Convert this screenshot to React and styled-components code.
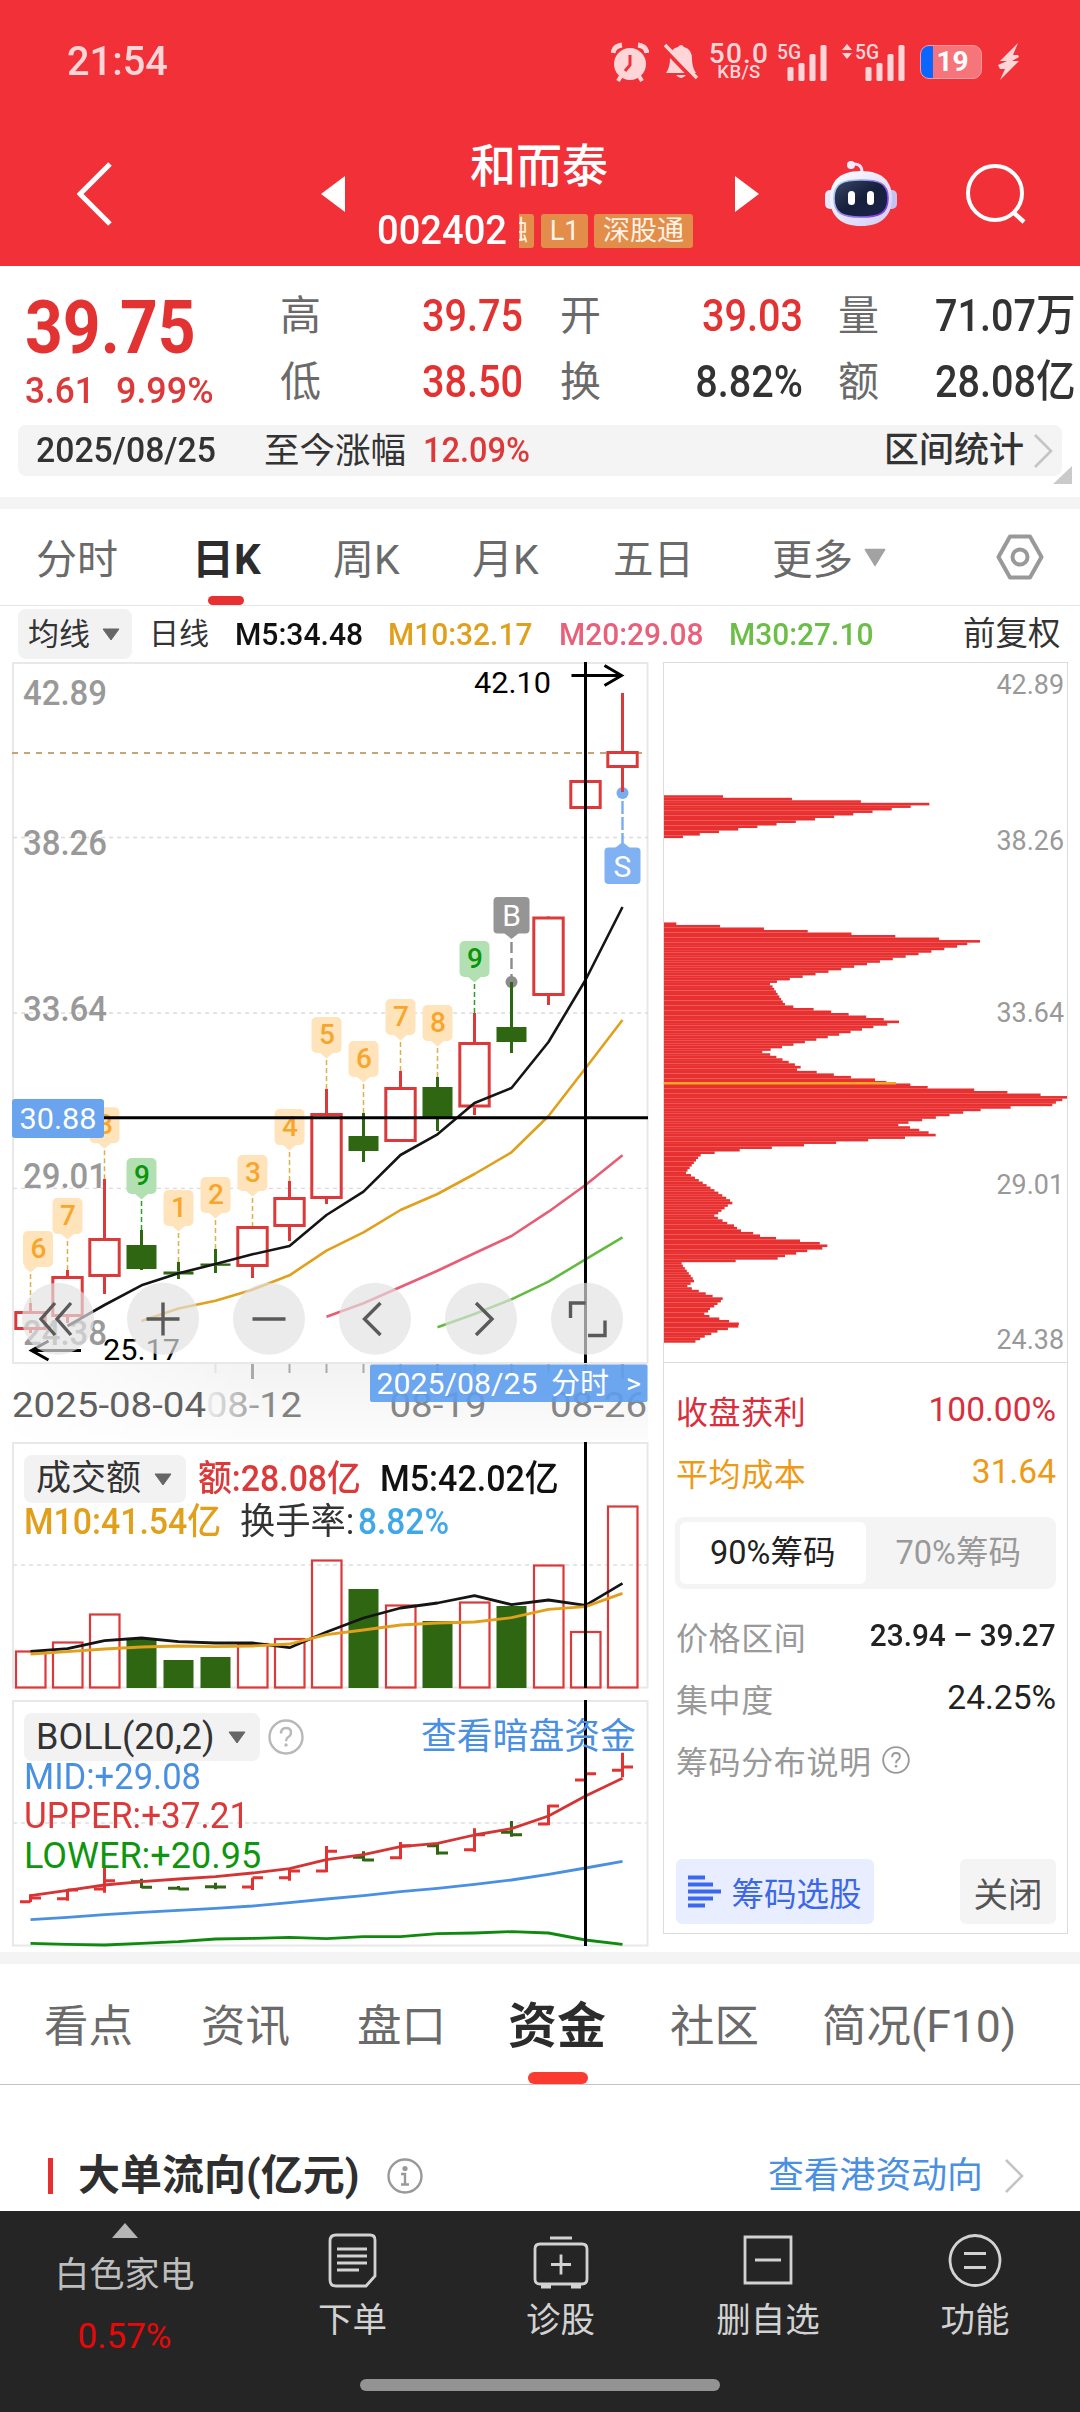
import React from 'react';
import styled, { createGlobalStyle } from 'styled-components';

const Global = createGlobalStyle`
  * { box-sizing: border-box; }
  body { margin: 0; background: #fff; }
  svg { display: block; }
`;

const red = '#e23232';
const up = '#dc3a3a';
const down = '#2f6612';
const orange = '#e0a01c';
const blue = '#4a90e2';

const Page = styled.div`
  width: 1080px;
  height: 2412px;
  overflow: hidden;
  display: flex;
  flex-direction: column;
  background: #fff;
  color: #333;
  font-family: Roboto, 'Noto Sans CJK SC', sans-serif;
  white-space: nowrap;
`;

const T = styled.span`
  display: block;
  font-size: ${(p) => p.$s}px;
  line-height: ${(p) => p.$lh || Math.round(p.$s * 1.2)}px;
  font-weight: ${(p) => p.$w || 400};
  color: ${(p) => p.$c || 'inherit'};
  transform: scaleX(${(p) => p.$x || 1});
  transform-origin: ${(p) => (p.$right ? 'right' : 'left')} center;
`;

/* ---------- header ---------- */
const Header = styled.header`
  height: 266px;
  flex: none;
  background: #f23038;
  color: #fff;
`;
const StatusBar = styled.div`
  height: 123px;
  padding-left: 67px;
  display: grid;
  grid-template-columns: 544px 52px 46px 68px 64px 79px 78px 22px;
  align-items: center;
  color: #ffd6d8;
`;
const Speed = styled.div`
  width: 60px;
  display: flex;
  flex-direction: column;
  align-items: center;
  font-weight: 500;
`;
const SpeedTop = styled.span`
  font-size: 28px;
  line-height: 21px;
  letter-spacing: 1.2px;
`;
const SpeedUnit = styled.span`
  font-size: 18.5px;
  line-height: 16px;
  letter-spacing: 0.4px;
`;
const Battery = styled.div`
  width: 62px;
  height: 34px;
  padding-left: 3px;
  border-radius: 9px;
  border: 1px solid #f99a9e;
  background: linear-gradient(90deg, #0a66ff 12px, #f6757b 12px);
  color: #fff;
  font: 700 28px/32px Roboto, sans-serif;
  text-align: center;
`;
const Nav = styled.div`
  height: 142px;
  padding-left: 77px;
  display: grid;
  grid-template-columns: 244px 56px 358px 90px 141px 60px;
  align-items: center;
`;
const TitleBlock = styled.div`
  padding-top: 9px;
`;
const StockName = styled.div`
  width: 324px;
  height: 64px;
  text-align: center;
  font-size: 46px;
  line-height: 63px;
  font-weight: 500;
`;
const CodeLine = styled.div`
  height: 64px;
  display: grid;
  grid-template-columns: 142px 22px 53px 99px;
  align-items: center;
`;
const Badge = styled.span`
  height: 34px;
  width: ${(p) => p.$width}px;
  overflow: hidden;
  display: flex;
  justify-content: ${(p) => (p.$cut ? 'flex-end' : 'center')};
  padding-right: ${(p) => (p.$cut ? 6 : 0)}px;
  border-radius: ${(p) => (p.$cut ? '0 3px 3px 0' : '3px')};
  background: #e38d4a;
  color: #fff2e6;
  font-size: 27px;
  line-height: 34px;
`;

function Signal({ arrows }) {
  const o = arrows ? 14 : 0;
  return (
    <svg width={50 + o} height="52" viewBox={`0 -6 ${50 + o} 52`}>
      {arrows && <path d="M1 8l5-6 5 6zM1 11l5 6 5-6z" fill="#ffd6d8" />}
      <text x={o} y="17" fontSize="20" fontWeight="500" fill="#ffd6d8" fontFamily="Roboto" textLength="24" lengthAdjust="spacingAndGlyphs">5G</text>
      {[[10, 25], [21, 21], [32, 12], [43, 3]].map(([x, y]) => (
        <rect key={x} x={x + o + 0.5} y={y} width="6" height={39 - y} rx="1.5" fill="#ffd6d8" />
      ))}
    </svg>
  );
}

function AlarmIcon() {
  return (
    <svg width="38" height="40" viewBox="0 0 38 40">
      <circle cx="19" cy="22" r="16" fill="#ffd6d8" />
      <path d="M2 11Q3 4 11 3M36 11Q35 4 27 3" stroke="#ffd6d8" strokeWidth="5" fill="none" />
      <path d="M10 34l-3 5M28 34l3 5" stroke="#ffd6d8" strokeWidth="4" />
      <path d="M19 13v10l-5 6" stroke="#f23038" strokeWidth="3" fill="none" />
    </svg>
  );
}
function BellOffIcon() {
  return (
    <svg width="36" height="38" viewBox="0 0 36 38">
      <path d="M3 30Q7 24 7 16Q7 5 15 4Q18 0 21 4Q29 6 29 16Q29 24 33 30z" fill="#ffd6d8" />
      <path d="M13 32h10q-5 6-10 0z" fill="#ffd6d8" />
      <path d="M0 5L32 38" stroke="#f23038" strokeWidth="4" />
      <path d="M2 2L34 35" stroke="#ffd6d8" strokeWidth="3.5" />
    </svg>
  );
}
function Robot() {
  return (
    <svg width="72" height="68" viewBox="0 0 72 68">
      <defs>
        <linearGradient id="shell" x1="0" y1="0" x2="1" y2="1">
          <stop offset="0" stopColor="#fff" /><stop offset="1" stopColor="#cfccf5" />
        </linearGradient>
        <linearGradient id="visor" x1="0" y1="0" x2="1" y2="1">
          <stop offset="0" stopColor="#3a4766" /><stop offset="0.5" stopColor="#161f3c" /><stop offset="1" stopColor="#1c2548" />
        </linearGradient>
        <linearGradient id="glow" x1="0" y1="0" x2="1" y2="0.6">
          <stop offset="0" stopColor="#a6e4f2" /><stop offset="1" stopColor="#8a3cf0" />
        </linearGradient>
      </defs>
      <path d="M27 4q10-1 10 8" stroke="#e8e4fb" strokeWidth="3" fill="none" />
      <circle cx="26" cy="5" r="4" fill="#f1effd" />
      <rect x="0" y="30" width="12" height="19" rx="5" fill="#e8e6fa" />
      <rect x="60" y="30" width="12" height="19" rx="5" fill="#c6c2ee" />
      <path d="M36 11C58 11 67 22 67 38C67 56 56 66 36 66C16 66 5 56 5 38C5 22 14 11 36 11z" fill="url(#shell)" />
      <path d="M36 20C54 20 63 23 63 38C63 54 54 57 36 57C18 57 9 54 9 38C9 23 18 20 36 20z" fill="url(#visor)" stroke="url(#glow)" strokeWidth="1.6" />
      <rect x="23" y="31" width="7" height="14" rx="3.5" fill="#fff" />
      <rect x="42" y="31" width="7" height="14" rx="3.5" fill="#fff" />
    </svg>
  );
}

/* ---------- quote ---------- */
const Quote = styled.section`
  height: 159px;
  flex: none;
  display: grid;
  grid-template-columns: 255px 60px 220px 60px 218px 97px 145px;
  padding-left: 25px;
`;
const PriceCol = styled.div`
  padding-top: 17px;
`;
const Change = styled.div`
  display: grid;
  grid-template-columns: 91px 1fr;
`;
const Pair = styled.div`
  padding-top: 17px;
  display: flex;
  flex-direction: column;
`;
const QuoteVal = styled.span`
  width: ${(p) => (p.$last ? 145 : 183)}px;
  font-size: 44px;
  line-height: 66px;
  font-weight: 500;
  color: ${(p) => p.$c};
  text-align: ${(p) => (p.$last ? 'left' : 'right')};
  transform: scaleX(0.9);
  transform-origin: ${(p) => (p.$last ? 'left' : 'right')} center;
`;
const Strip = styled.div`
  height: 51px;
  flex: none;
  margin: 0 18px;
  padding: 0 0 3px 18px;
  border-radius: 8px;
  background: #f4f4f4;
  display: grid;
  grid-template-columns: 228px 159px 461px 149px 22px;
  align-items: center;
`;
const Corner = styled.div`
  height: 21px;
  flex: none;
  padding-right: 8px;
  display: flex;
  justify-content: flex-end;
  svg { margin-top: -10px; }
`;
const Band = styled.div`
  height: 12px;
  flex: none;
  background: #f4f4f4;
`;

/* ---------- tabs ---------- */
const Periods = styled.nav`
  height: 97px;
  flex: none;
  border-bottom: 1px solid #e6e6e6;
  padding-left: 36px;
  display: grid;
  grid-template-columns: 156px 141px 139px 141px 159px 92px 131px 50px;
`;
const Tab = styled.div`
  display: flex;
  flex-direction: column;
  justify-content: space-between;
  padding-top: ${(p) => p.$top}px;
  font-size: ${(p) => p.$s}px;
  line-height: 52px;
  font-weight: ${(p) => (p.$on ? 700 : 400)};
  color: ${(p) => (p.$on ? '#2c2c2c' : '#6a6a6a')};
`;
const Underline = styled.i`
  width: ${(p) => p.$width}px;
  height: ${(p) => p.$h}px;
  margin-left: ${(p) => p.$ml}px;
  border-radius: 6px;
  background: ${(p) => p.$c};
`;
const IconCell = styled.div`
  display: flex;
  align-items: center;
`;
const Averages = styled.div`
  height: 54px;
  flex: none;
  padding: 2px 0 0 18px;
  display: grid;
  grid-template-columns: 131px 86px 153px 171px 170px 234px 120px;
  align-items: center;
`;
const Picker = styled.div`
  width: ${(p) => p.$width}px;
  height: ${(p) => p.$h}px;
  padding: 0 ${(p) => p.$pad + 2}px 0 ${(p) => p.$pad}px;
  border-radius: 8px;
  background: #f2f2f2;
  display: flex;
  align-items: center;
  justify-content: space-between;
`;

const Caret = ({ w = 18, h = 13, c = '#666' }) => (
  <svg width={w} height={h} viewBox="0 0 18 13" preserveAspectRatio="none">
    <path d="M1 1h16L9 12z" fill={c} stroke={c} strokeLinejoin="round" />
  </svg>
);
const Chevron = ({ w = 20, h = 34 }) => (
  <svg width={w} height={h} viewBox="0 0 20 34">
    <path d="M2 1l16 16L2 33" fill="none" stroke="#c4c4c4" strokeWidth="2.6" />
  </svg>
);

/* ---------- charts ---------- */
const Charts = styled.main`
  height: 1292px;
  flex: none;
  display: grid;
  grid-template-columns: 655px 425px;
`;
const LeftCol = styled.div`
  display: flex;
  flex-direction: column;
`;
const Pane = styled.div`
  display: grid;
  height: ${(p) => p.$h}px;
  > * { grid-area: 1 / 1; }
`;
const Legend = styled.div`
  padding: ${(p) => p.$top}px 0 0 24px;
  display: flex;
  flex-direction: column;
`;
const LegendRow = styled.div`
  height: ${(p) => p.$h}px;
  display: grid;
  grid-template-columns: ${(p) => p.$cols};
  align-items: center;
`;

const cx = (i) => 30.5 + 37 * i;
const poly = (ys, from = 0) => ys.map((y, i) => `${cx(i + from)},${y}`).join(' ');

/* body top, body bottom, high, low, rising */
const candles = [
  [1311, 1330, 1303, 1333, 1], [1276, 1317, 1270, 1323, 1], [1238, 1277, 1179, 1294, 1],
  [1245, 1269, 1230, 1270, 0], [1271.5, 1274.5, 1262, 1279, 0], [1263.5, 1265.8, 1249, 1273, 0],
  [1226, 1267, 1226, 1278, 1], [1197, 1227, 1181, 1241, 1], [1113, 1199, 1089, 1204, 1],
  [1136, 1151, 1113, 1162, 0], [1087, 1142, 1071, 1142, 1], [1087, 1117, 1077, 1131, 0],
  [1042, 1107.5, 1013, 1115, 1], [1027, 1042, 982, 1053, 0], [916.5, 996, 917, 1005, 1],
  [780, 809, 781, 828, 1], [751, 768, 693, 792, 1],
];
const ma5 = [1326, 1305, 1285.3, 1273.3, 1264, 1254.3, 1246, 1215, 1191.7, 1155, 1134.3, 1103, 1088, 1042, 980, 907];
const ma10 = [1321, 1308.5, 1300.7, 1289.7, 1275.3, 1250.7, 1232.3, 1210, 1194, 1174, 1152.3, 1116, 1068.3, 1020];
const ma20 = [1316.7, 1303.3, 1287, 1270.7, 1253.3, 1236, 1211.7, 1185, 1155.3];
const ma30 = [1327.3, 1314, 1299.3, 1281.7, 1259.3, 1237.3];
const marks = [
  [0, '6', 1231, 7.5], [1, '7', 1198], [2, '8', 1107.3], [3, '9', 1158], [4, '1', 1190], [5, '2', 1177], [6, '3', 1155],
  [7, '4', 1109], [8, '5', 1017], [9, '6', 1041], [10, '7', 999], [11, '8', 1005], [12, '9', 941],
];

const Fit = ({ x, y, w, s, c, children, weight }) => (
  <text x={x} y={y} fontSize={s} fill={c} fontWeight={weight} textLength={w} lengthAdjust="spacingAndGlyphs">
    {children}
  </text>
);

function KChart() {
  const circles = [58, 163, 269, 375, 481, 587];
  return (
    <svg width="655" height="780" viewBox="0 660 655 780" fontFamily="Roboto, 'Noto Sans CJK SC', sans-serif">
      <defs>
        <linearGradient id="shade" x1="0" y1="0" x2="0" y2="1">
          <stop offset="0" stopColor="#000" stopOpacity="0.05" /><stop offset="1" stopColor="#000" stopOpacity="0.012" />
        </linearGradient>
        <linearGradient id="shadeX"><stop offset="0" stopColor="#fff" stopOpacity="0.1" /><stop offset="0.4" stopColor="#fff" /></linearGradient>
        <mask id="shadeMask"><rect x="12" y="1364" width="636" height="80" fill="url(#shadeX)" /></mask>
        <linearGradient id="dateFade"><stop offset="0" stopColor="#eee" /><stop offset="0.5" stopColor="#a0a0a0" /><stop offset="0.75" stopColor="#808080" /></linearGradient>
      </defs>
      <rect x="12" y="1364" width="636" height="76" fill="url(#shade)" mask="url(#shadeMask)" />
      <rect x="13" y="663" width="634.5" height="700" fill="none" stroke="#e8e8e8" strokeWidth="2" />
      {[837.5, 1013, 1188.3].map((y) => <path key={y} d={`M13 ${y}H648`} stroke="#dcdcdc" strokeWidth="1.3" strokeDasharray="4 4" />)}
      <path d="M12 753H643" stroke="#c9a474" strokeWidth="2" strokeDasharray="6 6" />
      {[['42.89', 705], ['38.26', 855], ['33.64', 1020.5], ['29.01', 1187.5], ['24.38', 1345]].map(([t, y]) => (
        <Fit key={t} x={23} y={y} w={84} s={35} c="#999" weight="500">{t}</Fit>
      ))}
      <Fit x={474} y={693} w={77} s={29} c="#000">42.10</Fit>
      <path d="M571.5 675.5H621M604.5 665.5L621.5 675.5L604.5 685.5" stroke="#000" strokeWidth="3" fill="none" />
      <Fit x={103} y={1360} w={77} s={29} c="#000">25.17</Fit>
      <path d="M81 1350.5H32M48.5 1341L31.5 1350.5L48.5 1360" stroke="#000" strokeWidth="3" fill="none" />

      {marks.map(([i, t, y, dx = 0]) => {
        const g = t === '9';
        const x = cx(i);
        return (
          <g key={i}>
            <path d={`M${x} ${y + 43}V${candles[i][2]}`} stroke={g ? '#2ba02b' : '#dcb04a'} strokeWidth="1.5" strokeDasharray="5 3" />
            <rect x={x - 15 + dx} y={y} width="30" height="36" rx="5" fill={g ? '#b2e0b2' : '#ffe3bb'} />
            <path d={`M${x - 7} ${y + 35.5}h14l-7 6z`} fill={g ? '#b2e0b2' : '#ffe3bb'} />
            <text x={x + dx + 0.5} y={y + 27} fontSize="28" fontWeight="500" textAnchor="middle" fill={g ? '#0a960a' : '#f8a52c'}>{t}</text>
          </g>
        );
      })}

      {candles.map(([t, b, h, l, r], i) => (
        <g key={i}>
          <path d={`M${cx(i)} ${h}V${t}M${cx(i)} ${b}V${l}`} stroke={r ? up : down} strokeWidth="3" />
          {r ? <rect x={cx(i) - 14.7} y={t + 1.5} width="29.4" height={b - t - 3} fill="none" stroke={up} strokeWidth="3" />
            : <rect x={cx(i) - 15} y={t} width="30" height={b - t} fill={down} />}
        </g>
      ))}

      <g fill="none" strokeWidth="2.6" strokeLinejoin="round">
        <polyline points={poly(ma5, 1)} stroke="#151515" />
        <polyline points={poly(ma10, 3)} stroke={orange} />
        <polyline points={poly(ma20, 8)} stroke="#e85d76" />
        <polyline points={poly(ma30, 11)} stroke="#62bb40" />
      </g>

      <circle cx="511.5" cy="982" r="6" fill="#8c8c8c" />
      <path d="M511.5 942V977" stroke="#8c8c8c" strokeWidth="2.4" strokeDasharray="11 5" />
      <path d="M511.5 982V1028" stroke={down} strokeWidth="3" />
      <rect x="493.5" y="897" width="36" height="36.5" rx="4" fill="#959595" />
      <path d="M504 933h15l-7.5 6z" fill="#959595" />
      <text x="511.5" y="925.5" fontSize="30" fill="#fff" textAnchor="middle">B</text>

      <circle cx="622.5" cy="793" r="6" fill="#78adf2" />
      <path d="M622.5 778V792" stroke={up} strokeWidth="3" />
      <path d="M622.5 801V843" stroke="#78adf2" strokeWidth="2.4" strokeDasharray="13 3" />
      <rect x="604.5" y="847.5" width="36" height="36.5" rx="4" fill="#80b2f3" />
      <path d="M615 848h15l-7.5-6z" fill="#80b2f3" />
      <text x="622.5" y="877" fontSize="30" fill="#fff" textAnchor="middle">S</text>

      <path d="M585.5 662V1363M104 1117.7H648" stroke="#000" strokeWidth="3" fill="none" />
      <rect x="12" y="1099" width="92" height="39" rx="3" fill="#6aa4ee" />
      <Fit x={19.5} y={1129} w={77} s={29} c="#fff">30.88</Fit>

      {circles.map((x) => <circle key={x} cx={x} cy="1318.7" r="36" fill="rgba(226,226,226,.68)" />)}
      <g fill="none" stroke="#5a5a5a" strokeWidth="3.4">
        <path d="M55 1303l-14 16l14 16M71 1303l-14 16l14 16" />
        <path d="M146.5 1319h33M163 1302.5v33" />
        <path d="M252.5 1319h33" />
        <path d="M380.5 1303l-16 16l16 16" />
        <path d="M476 1303l16 16l-16 16" />
        <path d="M570.5 1318v-15h15M605 1320.5v15h-17" />
      </g>

      {[5, 6, 7, 8, 9, 10, 11, 12, 13, 14, 15, 16].map((i) => (
        <path key={i} d={`M${cx(i)} 1364v${i === 6 || i === 11 || i === 16 ? 15 : 9}`} stroke={i === 5 ? '#e3e3e3' : '#aaa'} strokeWidth={i === 6 || i === 11 || i === 16 ? 3 : 2} />
      ))}
      <Fit x={12} y={1417} w={194} s={35} c="#606060">2025-08-04</Fit>
      <Fit x={206} y={1417} w={96} s={35} c="url(#dateFade)">08-12</Fit>
      <Fit x={389.5} y={1417} w={97} s={35} c="#868686">08-19</Fit>
      <Fit x={550} y={1417} w={97} s={35} c="#868686">08-26</Fit>
      <rect x="370" y="1364.5" width="277.5" height="37.5" rx="2" fill="#5d9dee" fillOpacity="0.9" />
      <Fit x={376.5} y={1394} w={161} s={29} c="#fff">2025/08/25</Fit>
      <Fit x={551} y={1394} w={58} s={29} c="#fff">分时</Fit>
      <Fit x={626} y={1393} w={15} s={27} c="#fff">&gt;</Fit>
    </svg>
  );
}

const vols = [
  [1651.5, 1], [1642.5, 1], [1614.5, 1], [1639, 0], [1660, 0], [1657, 0], [1644, 1], [1639, 1], [1560.5, 1],
  [1589, 0], [1605.5, 1], [1621, 0], [1602.5, 1], [1606, 0], [1565.5, 1], [1632, 1], [1506.5, 1],
];
const v5 = [664, 656, 632, 624, 635, 639, 639, 653, 606, 564, 534, 519, 497, 524, 510, 526, 460].map((v) => 1430 + v / 3);
const v10 = [672, 665, 657, 651, 648, 650, 648, 642, 614, 600, 585, 579, 576, 563, 538, 530, 490].map((v) => 1430 + v / 3);

function VolumeChart() {
  return (
    <svg width="655" height="257" viewBox="0 1440 655 257">
      <rect x="13" y="1443" width="634.5" height="244.5" fill="none" stroke="#e8e8e8" strokeWidth="2" />
      <path d="M13 1565H648" stroke="#e6e6e6" strokeWidth="2" strokeDasharray="4 4" />
      {vols.map(([t, r], i) => r
        ? <rect key={i} x={cx(i) - 14.5} y={t} width="29.5" height={1687.5 - t} fill="none" stroke={up} strokeWidth="2.2" />
        : <rect key={i} x={cx(i) - 15} y={t} width="30" height={1688 - t} fill={down} />)}
      <g fill="none" strokeWidth="2.8" strokeLinejoin="round">
        <polyline points={poly(v5)} stroke="#151515" />
        <polyline points={poly(v10)} stroke={orange} />
      </g>
      <path d="M585.5 1442V1688" stroke="#000" strokeWidth="3" />
    </svg>
  );
}

const b = (a) => a.map((v) => 1690 + v / 3);
const upper = b([617, 601, 585, 575, 567, 560, 549, 536, 509, 494, 470, 460, 435, 416, 378, 318, 265]);
const mid = b([689, 682, 674, 667, 661, 655, 648, 638, 627, 617, 605, 595, 583, 570, 553, 534, 514]);
const lower = b([760, 763, 765, 760, 755, 747, 745, 742, 746, 740, 740, 731, 729, 725, 729, 750, 763]);
const ohlc = [
  [613, 636, 635, 624, 1], [597, 632, 626, 600, 1], [531, 608, 597, 572, 1], [566, 594, 575, 592, 0], [588, 598, 595, 597, 0],
  [578, 598, 590, 591, 0], [563, 600, 591, 563, 1], [535, 572, 563, 543, 1], [468, 547, 543, 484, 1], [484, 514, 502, 510, 0],
  [456, 508, 503, 467, 1], [458, 494, 467, 489, 0], [415, 485, 479, 434, 1], [393, 440, 427, 434, 0], [345, 406, 402, 348, 1],
  [245, 284, 270, 251, 1], [188, 262, 241, 231, 1],
];

function BollChart() {
  return (
    <svg width="655" height="255" viewBox="0 1697 655 255">
      <rect x="13" y="1701" width="634.5" height="244.5" fill="none" stroke="#e8e8e8" strokeWidth="2" />
      <path d="M13 1823H648" stroke="#e6e6e6" strokeWidth="2" strokeDasharray="4 4" />
      {ohlc.map((r, i) => {
        const [h, l, o, c] = b(r.slice(0, 4));
        return <path key={i} d={`M${cx(i)} ${h}V${l}M${cx(i) - 10.5} ${o}H${cx(i)}M${cx(i)} ${c}h10.5`} stroke={r[4] ? red : down} strokeWidth="3" fill="none" />;
      })}
      <g fill="none" strokeWidth="2.8" strokeLinejoin="round">
        <polyline points={poly(upper)} stroke="#d43434" />
        <polyline points={poly(mid)} stroke={blue} />
        <polyline points={poly(lower)} stroke="#0f8a0f" />
      </g>
      <path d="M585.5 1700V1946" stroke="#000" strokeWidth="3" />
    </svg>
  );
}

const HelpIcon = ({ size, c }) => (
  <svg width={size} height={size} viewBox="0 0 36 36">
    <circle cx="18" cy="18" r="16.5" fill="none" stroke={c} strokeWidth="2.4" />
    <path d="M13 14.5q0-5.5 5-5.5t5 4.5q0 3-3 4.7-2 1.2-2 4" fill="none" stroke={c} strokeWidth="2.4" />
    <circle cx="18" cy="26" r="1.7" fill={c} />
  </svg>
);

/* ---------- chip distribution ---------- */
const ChipPanel = styled.aside`
  width: 405px;
  height: 1272px;
  margin: 2px 0 0 8px;
  border: 1px solid #dcdcdc;
  display: flex;
  flex-direction: column;
`;
const Plot = styled.div`
  height: 700px;
  flex: none;
  border-bottom: 1px solid #dcdcdc;
`;
const ChipRow = styled.div`
  display: flex;
  align-items: center;
  justify-content: ${(p) => (p.$start ? 'flex-start' : 'space-between')};
  gap: 10px;
  height: ${(p) => p.$h}px;
  flex: none;
  padding: 0 11px 0 12px;
  font-size: 32px;
  color: ${(p) => p.$c};
`;
const ChipLabel = styled.span`
  letter-spacing: 0.6px;
`;
const Segment = styled.div`
  height: 72px;
  flex: none;
  margin: 30px 11px 16px 11px;
  padding: 5px;
  border-radius: 9px;
  background: #f4f4f4;
  display: grid;
  grid-template-columns: 1fr 1fr;
`;
const SegItem = styled.div`
  border-radius: 6px;
  background: ${(p) => (p.$on ? '#fff' : 'transparent')};
  color: ${(p) => (p.$on ? '#222' : '#999')};
  font-size: 32.5px;
  line-height: 62px;
  text-align: center;
`;
const Actions = styled.div`
  margin-top: 68px;
  padding: 0 11px 0 12px;
  display: flex;
  justify-content: space-between;
`;
const Action = styled.div`
  width: ${(p) => p.$width}px;
  height: 65px;
  border-radius: 6px;
  display: flex;
  align-items: center;
  justify-content: center;
  gap: 10px;
  background: ${(p) => p.$bg};
  color: ${(p) => p.$c};
  font-size: ${(p) => p.$s}px;
`;

const chipKeys = [
  [[318, 219], [334.4, 838], [340, 782], [405, 99]],
  [[595, 79], [633, 990], [640, 952], [724, 360], [772, 405], [775, 430], [808, 747], [813, 712], [873, 337], [907, 452],
    [912, 441], [937, 675], [943, 738], [949, 833], [972, 1251], [977, 1237], [988, 1207], [994, 1082], [999, 992],
    [1032, 745], [1054, 857], [1060, 765], [1091, 220], [1098, 152], [1136, 108], [1201, 247], [1232, 193], [1255, 252],
    [1262, 273], [1273, 330], [1278, 378], [1283, 450], [1294, 532], [1300, 517], [1322, 383], [1327, 257], [1332, 160],
    [1337, 95], [1371, 132], [1386, 112], [1414, 218], [1435, 180], [1447, 163], [1469, 281], [1486, 184], [1508, 128]],
];
const STEP = 5.48;
const chipBars = chipKeys.flatMap((keys) => {
  const out = [];
  const end = keys[keys.length - 1][0];
  for (let y = keys[0][0]; y <= end + 1; y += STEP) {
    const near = keys.find((p) => Math.abs(p[0] - y) <= 2.6);
    let k = keys.findIndex((p) => p[0] >= y);
    if (k < 0) k = keys.length - 1;
    const p = keys[Math.max(k - 1, 0)];
    const q = keys[k];
    const v = near ? near[1] : p[1] + ((q[1] - p[1]) * (y - p[0])) / (q[0] - p[0]);
    out.push([650 + y / 2.178, (v - 42) / 3]);
  }
  return out;
});

function ChipPlot() {
  return (
    <svg width="403" height="698" viewBox="664 662.5 403 698" fontFamily="Roboto, sans-serif">
      {chipBars.map(([y, w], i) => <rect key={i} x="664" y={y - 1.25} width={w} height="2.6" fill="#e83030" />)}
      <rect x="664" y="1081.5" width="232" height="2.5" fill="#f0a820" />
      {[['42.89', 693], ['38.26', 849], ['33.64', 1021.5], ['29.01', 1193], ['24.38', 1348.5]].map(([t, y]) => (
        <Fit key={t} x={996.5} y={y} w={67.5} s={27} c="#999">{t}</Fit>
      ))}
    </svg>
  );
}

/* ---------- lower tabs, section and footer ---------- */
const Sections = styled.nav`
  height: 121px;
  flex: none;
  border-bottom: 1px solid #c4c4c4;
  padding-left: 44px;
  display: grid;
  grid-template-columns: 157px 156px 151px 162px 152px 240px;
`;
const FlowHead = styled.section`
  height: 126px;
  flex: none;
  padding: 55px 0 0 48px;
  display: grid;
  grid-template-columns: 30px 309px 381px 236px 40px;
  align-items: center;
  align-content: start;
  grid-template-rows: 72px;
`;
const Mark = styled.i`
  width: 5px;
  height: 36px;
  background: #e63030;
`;
const Footer = styled.footer`
  height: 201px;
  flex: none;
  background: #252525;
  color: #d2d2d2;
  display: flex;
  flex-direction: column;
  align-items: center;
`;
const FootRow = styled.div`
  width: 1080px;
  height: 168px;
  display: grid;
  grid-template-columns: 248px 209px 207px 208px 206px;
`;
const Sector = styled.div`
  padding: 12px 0 0 1px;
  display: flex;
  flex-direction: column;
  align-items: center;
  font-size: 35px;
  line-height: 50px;
  color: #bdbdbd;
`;
const SectorPct = styled.span`
  margin-top: 11px;
  color: #e80808;
`;
const SectorName = styled.span`
  margin-top: 13px;
`;
const FootItem = styled.div`
  padding-top: 21px;
  display: flex;
  flex-direction: column;
  align-items: center;
  gap: 3px;
  font-size: 34.5px;
  line-height: 56px;
`;
const HomeBar = styled.i`
  width: 360px;
  height: 12px;
  border-radius: 6px;
  background: #939393;
`;

const footIcons = {
  order: (
    <path d="M11 3h34q5 0 5 5v36l-9 10H11q-6 0-6-6V9q0-6 6-6zM12 17h30M12 24h30M12 31h30M12 38h22" />
  ),
  diagnose: (
    <path d="M7 12h42q5 0 5 5v30q0 5-5 5H7q-5 0-5-5V17q0-5 5-5zM17 6h22M28 22.5v20M18 32.5h20M8 55h10M38 55h10" />
  ),
  remove: <path d="M5 5h46v46H5zM15 28h26" />,
  more: <path d="M28 3.5a25 25 0 1 0 .01 0zM17 21.5h22M17 35.5h22" />,
};

export default function App() {
  return (
    <Page>
      <Global />
      <Header>
        <StatusBar>
          <T $s={41} $w={500} $x={0.97}>21:54</T>
          <AlarmIcon />
          <BellOffIcon />
          <Speed><SpeedTop>50.0</SpeedTop><SpeedUnit>KB/S</SpeedUnit></Speed>
          <Signal />
          <Signal arrows />
          <Battery>19</Battery>
          <svg width="22" height="38" viewBox="0 0 22 38"><path d="M20 0L2 18h7L0 22l2 4h5L2 37l19-19h-7l7-4-1-2h-5z" fill="#ffd6d8" /></svg>
        </StatusBar>
        <Nav>
          <svg width="36" height="64" viewBox="0 0 36 64"><path d="M33 2L3 32l30 30" fill="none" stroke="#fff" strokeWidth="5" /></svg>
          <svg width="24" height="36" viewBox="0 0 24 36"><path d="M24 0v36L0 18z" fill="#fff" /></svg>
          <TitleBlock>
            <StockName>和而泰</StockName>
            <CodeLine>
              <T $s={41} $w={500} $x={0.93}>002402</T>
              <Badge $cut $width={15}>融</Badge>
              <Badge $width={47}>L1</Badge>
              <Badge $width={99}>深股通</Badge>
            </CodeLine>
          </TitleBlock>
          <svg width="24" height="36" viewBox="0 0 24 36"><path d="M0 0v36l24-18z" fill="#fff" /></svg>
          <Robot />
          <svg width="62" height="62" viewBox="0 0 62 62"><circle cx="29" cy="30" r="27" fill="none" stroke="#fff" strokeWidth="4" /><path d="M47 49l11 10" stroke="#fff" strokeWidth="4.5" /></svg>
        </Nav>
      </Header>

      <Quote>
        <PriceCol>
          <T $s={75} $lh={88} $w={700} $c={red} $x={0.88}>39.75</T>
          <Change>
            <T $s={37} $lh={40} $c={up} $w={500} $x={0.95}>3.61</T>
            <T $s={37} $lh={40} $c={up} $w={500} $x={0.97}>9.99%</T>
          </Change>
        </PriceCol>
        {[
          ['高', '39.75', red, '低', '38.50', red],
          ['开', '39.03', red, '换', '8.82%', '#333'],
          ['量', '71.07万', '#333', '额', '28.08亿', '#333'],
        ].map(([a, v, c, d, e, f], i) => (
          <React.Fragment key={a}>
            <Pair>
              <T $s={41} $lh={66} $c="#6a6a6a">{a}</T>
              <T $s={41} $lh={66} $c="#6a6a6a">{d}</T>
            </Pair>
            <Pair>
              <QuoteVal $last={i === 2} $c={c}>{v}</QuoteVal>
              <QuoteVal $last={i === 2} $c={f}>{e}</QuoteVal>
            </Pair>
          </React.Fragment>
        ))}
      </Quote>
      <Strip>
        <T $s={35} $w={500} $x={0.965}>2025/08/25</T>
        <T $s={35.5}>至今涨幅</T>
        <T $s={35} $w={500} $c={up} $x={0.93}>12.09%</T>
        <T $s={35} $w={500} $lh={52}>区间统计</T>
        <Chevron />
      </Strip>
      <Corner><svg width="19" height="18" viewBox="0 0 19 18"><path d="M19 0v18H0z" fill="#cacaca" /></svg></Corner>
      <Band />

      <Periods>
        <Tab $s={41} $top={25}>分时</Tab>
        <Tab $s={42} $top={25} $on>日K<Underline $width={36} $h={9} $ml={16} $c="#e83030" /></Tab>
        <Tab $s={41} $top={25}>周K</Tab>
        <Tab $s={41} $top={25}>月K</Tab>
        <Tab $s={40.5} $top={25}>五日</Tab>
        <Tab $s={40.5} $top={25}>更多</Tab>
        <IconCell><Caret w={22} h={19} c="#a2a2a2" /></IconCell>
        <IconCell>
          <svg width="50" height="50" viewBox="0 0 50 50"><g fill="none" stroke="#999" strokeWidth="4" strokeLinejoin="round"><path d="M15 4.5h20l11.5 20.5L35 45.5H15L3.5 25z" /><circle cx="25" cy="25" r="7.5" /></g></svg>
        </IconCell>
      </Periods>
      <Averages>
        <Picker $width={114} $h={50} $pad={10}><T $s={31}>均线</T><Caret /></Picker>
        <T $s={30}>日线</T>
        <T $s={32} $c="#111" $x={0.94} $w={500}>M5:34.48</T>
        <T $s={32} $c={orange} $x={0.935} $w={500}>M10:32.17</T>
        <T $s={32} $c="#e8617a" $x={0.935} $w={500}>M20:29.08</T>
        <T $s={32} $c="#6cbf46" $x={0.935} $w={500}>M30:27.10</T>
        <T $s={32.5}>前复权</T>
      </Averages>

      <Charts>
        <LeftCol>
          <KChart />
          <Pane $h={257}>
            <VolumeChart />
            <Legend $top={15}>
              <LegendRow $h={46} $cols="174px 182px 200px">
                <Picker $width={162} $h={48} $pad={12}><T $s={35}>成交额</T><Caret /></Picker>
                <T $s={36} $c={up} $w={500} $x={0.94}>额:28.08亿</T>
                <T $s={36} $c="#111" $w={500} $x={0.945}>M5:42.02亿</T>
              </LegendRow>
              <LegendRow $h={36} $cols="216px 118px 200px">
                <T $s={36} $c={orange} $w={500} $x={0.94}>M10:41.54亿</T>
                <T $s={36} $x={0.98}>换手率:</T>
                <T $s={36} $c="#41a8e8" $w={500} $x={0.93}>8.82%</T>
              </LegendRow>
            </Legend>
          </Pane>
          <Pane $h={255}>
            <BollChart />
            <Legend $top={16}>
              <LegendRow $h={46} $cols="244px 153px 240px">
                <Picker $width={236} $h={48} $pad={12}><T $s={36}>BOLL(20,2)</T><Caret /></Picker>
                <HelpIcon size={36} c="#b8b8b8" />
                <T $s={35.8} $c={blue}>查看暗盘资金</T>
              </LegendRow>
              <T $s={36} $lh={36} $c={blue} $x={0.96}>MID:+29.08</T>
              <T $s={36} $lh={42} $c={up} $x={0.975}>UPPER:+37.21</T>
              <T $s={36} $lh={38} $c="#0f960f" $x={1}>LOWER:+20.95</T>
            </Legend>
          </Pane>
        </LeftCol>
        <ChipPanel>
          <Plot><ChipPlot /></Plot>
          <ChipRow $h={94} $c="#d92f3c"><ChipLabel>收盘获利</ChipLabel><T $s={33.5}>100.00%</T></ChipRow>
          <ChipRow $h={30} $c="#ee9a16"><ChipLabel>平均成本</ChipLabel><T $s={33.5}>31.64</T></ChipRow>
          <Segment>
            <SegItem $on>90%筹码</SegItem>
            <SegItem>70%筹码</SegItem>
          </Segment>
          <ChipRow $h={62} $c="#999"><ChipLabel>价格区间</ChipLabel><T $s={31.5} $w={500} $c="#222" $x={0.945} $right>23.94 – 39.27</T></ChipRow>
          <ChipRow $h={62} $c="#999"><ChipLabel>集中度</ChipLabel><T $s={33.5} $c="#222">24.25%</T></ChipRow>
          <ChipRow $h={62} $c="#999" $start><ChipLabel>筹码分布说明</ChipLabel><HelpIcon size={28} c="#999" /></ChipRow>
          <Actions>
            <Action $width={198} $s={32.5} $bg="#e8eeff" $c="#3c68e8">
              <svg width="33" height="33" viewBox="0 0 33 33"><path d="M0 2.5h17M0 9.5h25M0 16.5h33M0 23.5h25M0 30.5h17" stroke="#3c68f0" strokeWidth="3.8" /></svg>
              筹码选股
            </Action>
            <Action $width={96} $s={34.5} $bg="#f4f4f4" $c="#555">关闭</Action>
          </Actions>
        </ChipPanel>
      </Charts>
      <Band />

      <Sections>
        <Tab $s={44.5} $top={37}>看点</Tab>
        <Tab $s={44.5} $top={37}>资讯</Tab>
        <Tab $s={44.5} $top={37}>盘口</Tab>
        <Tab $s={49} $top={37} $on>资金<Underline $width={60} $h={12} $ml={20} $c="#fb3a30" /></Tab>
        <Tab $s={44.5} $top={37}>社区</Tab>
        <Tab $s={44.5} $top={37}>简况(F10)</Tab>
      </Sections>
      <FlowHead>
        <Mark />
        <T $s={42} $w={700} $c="#2f2f2f">大单流向(亿元)</T>
        <svg width="36" height="36" viewBox="0 0 36 36"><circle cx="18" cy="18" r="16.5" fill="none" stroke="#999" strokeWidth="2.4" /><path d="M14 16h4v10M14 26.5h8" fill="none" stroke="#999" strokeWidth="2.4" /><circle cx="18" cy="10.5" r="2.6" fill="#999" /></svg>
        <T $s={35.8} $c={blue}>查看港资动向</T>
        <Chevron />
      </FlowHead>
      <Footer>
        <FootRow>
          <Sector>
            <svg width="26" height="15" viewBox="0 0 26 15"><path d="M13 0l13 15H0z" fill="#b5b5b5" /></svg>
            <SectorName>白色家电</SectorName>
            <SectorPct>0.57%</SectorPct>
          </Sector>
          {[['order', '下单'], ['diagnose', '诊股'], ['remove', '删自选'], ['more', '功能']].map(([k, t]) => (
            <FootItem key={k}>
              <svg width="56" height="57" viewBox="0 0 56 57" fill="none" stroke="#d2d2d2" strokeWidth="2.8">{footIcons[k]}</svg>
              {t}
            </FootItem>
          ))}
        </FootRow>
        <HomeBar />
      </Footer>
    </Page>
  );
}
